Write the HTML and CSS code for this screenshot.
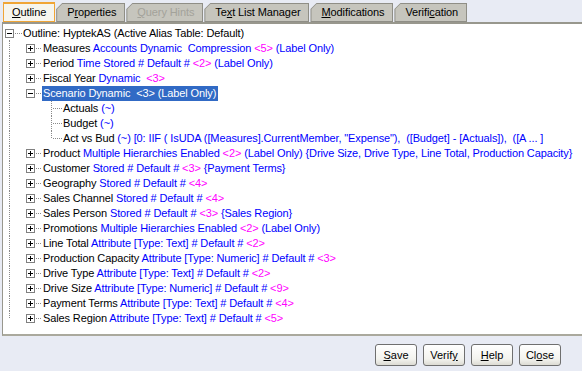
FILE: index.html
```html
<!DOCTYPE html>
<html lang="en">
<head>
    <meta charset="UTF-8">
    <title>Outline Editor</title>
    <link rel="stylesheet" href="styles.css">
</head>
<body>
    <div class="window">
        <div class="tabs">
            <div class="tab active"><span class="tab-in"><u>O</u>utline</span></div>
            <div class="tab"><span class="tab-in">P<u>r</u>operties</span></div>
            <div class="tab disabled"><span class="tab-in"><u>Q</u>uery Hints</span></div>
            <div class="tab"><span class="tab-in">Te<u>x</u>t List Manager</span></div>
            <div class="tab"><span class="tab-in"><u>M</u>odifications</span></div>
            <div class="tab"><span class="tab-in">Verifi<u>c</u>ation</span></div>
        </div>

        <div class="panel">
            <div class="row">
                <span class="node root-node"><i class="box minus"></i><i class="leg"></i></span>
                <span class="label">Outline: HyptekAS (Active Alias Table: Default)</span>
            </div>
            <div class="row">
                <span class="guide"></span>
                <span class="node"><i class="box plus"></i><i class="leg"></i></span>
                <span class="label">Measures <b>Accounts Dynamic  Compression</b> <em>&lt;5&gt;</em> <b>(Label Only)</b></span>
            </div>
            <div class="row">
                <span class="guide"></span>
                <span class="node"><i class="box plus"></i><i class="leg"></i></span>
                <span class="label">Period <b>Time Stored # Default #</b> <em>&lt;2&gt;</em> <b>(Label Only)</b></span>
            </div>
            <div class="row">
                <span class="guide"></span>
                <span class="node"><i class="box plus"></i><i class="leg"></i></span>
                <span class="label">Fiscal Year <b>Dynamic</b>  <em>&lt;3&gt;</em></span>
            </div>
            <div class="row">
                <span class="guide"></span>
                <span class="node"><i class="box minus"></i><i class="leg"></i></span>
                <span class="label selected">Scenario Dynamic  &lt;3&gt; (Label Only)</span>
            </div>
            <div class="row">
                <span class="guide"></span>
                <span class="gap"></span>
                <span class="leaf"><i class="vline"></i><i class="leg"></i></span>
                <span class="label">Actuals <b>(~)</b></span>
            </div>
            <div class="row">
                <span class="guide"></span>
                <span class="gap"></span>
                <span class="leaf"><i class="vline"></i><i class="leg"></i></span>
                <span class="label">Budget <b>(~)</b></span>
            </div>
            <div class="row">
                <span class="guide"></span>
                <span class="gap"></span>
                <span class="leaf end"><i class="vline"></i><i class="leg"></i></span>
                <span class="label">Act vs Bud <b>(~) [0: IIF ( IsUDA ([Measures].CurrentMember, "Expense"),  ([Budget] - [Actuals]),  ([A ... ]</b></span>
            </div>
            <div class="row">
                <span class="guide"></span>
                <span class="node"><i class="box plus"></i><i class="leg"></i></span>
                <span class="label">Product <b>Multiple Hierarchies Enabled</b> <em>&lt;2&gt;</em> <b>(Label Only) {Drive Size, Drive Type, Line Total, Production Capacity}</b></span>
            </div>
            <div class="row">
                <span class="guide"></span>
                <span class="node"><i class="box plus"></i><i class="leg"></i></span>
                <span class="label">Customer <b>Stored # Default #</b> <em>&lt;3&gt;</em> <b>{Payment Terms}</b></span>
            </div>
            <div class="row">
                <span class="guide"></span>
                <span class="node"><i class="box plus"></i><i class="leg"></i></span>
                <span class="label">Geography <b>Stored # Default #</b> <em>&lt;4&gt;</em></span>
            </div>
            <div class="row">
                <span class="guide"></span>
                <span class="node"><i class="box plus"></i><i class="leg"></i></span>
                <span class="label">Sales Channel <b>Stored # Default #</b> <em>&lt;4&gt;</em></span>
            </div>
            <div class="row">
                <span class="guide"></span>
                <span class="node"><i class="box plus"></i><i class="leg"></i></span>
                <span class="label">Sales Person <b>Stored # Default #</b> <em>&lt;3&gt;</em> <b>{Sales Region}</b></span>
            </div>
            <div class="row">
                <span class="guide"></span>
                <span class="node"><i class="box plus"></i><i class="leg"></i></span>
                <span class="label">Promotions <b>Multiple Hierarchies Enabled</b> <em>&lt;2&gt;</em> <b>(Label Only)</b></span>
            </div>
            <div class="row">
                <span class="guide"></span>
                <span class="node"><i class="box plus"></i><i class="leg"></i></span>
                <span class="label">Line Total <b>Attribute [Type: Text] # Default #</b> <em>&lt;2&gt;</em></span>
            </div>
            <div class="row">
                <span class="guide"></span>
                <span class="node"><i class="box plus"></i><i class="leg"></i></span>
                <span class="label">Production Capacity <b>Attribute [Type: Numeric] # Default #</b> <em>&lt;3&gt;</em></span>
            </div>
            <div class="row">
                <span class="guide"></span>
                <span class="node"><i class="box plus"></i><i class="leg"></i></span>
                <span class="label">Drive Type <b>Attribute [Type: Text] # Default #</b> <em>&lt;2&gt;</em></span>
            </div>
            <div class="row">
                <span class="guide"></span>
                <span class="node"><i class="box plus"></i><i class="leg"></i></span>
                <span class="label">Drive Size <b>Attribute [Type: Numeric] # Default #</b> <em>&lt;9&gt;</em></span>
            </div>
            <div class="row">
                <span class="guide"></span>
                <span class="node"><i class="box plus"></i><i class="leg"></i></span>
                <span class="label">Payment Terms <b>Attribute [Type: Text] # Default #</b> <em>&lt;4&gt;</em></span>
            </div>
            <div class="row">
                <span class="guide end"></span>
                <span class="node"><i class="box plus"></i><i class="leg"></i></span>
                <span class="label">Sales Region <b>Attribute [Type: Text] # Default #</b> <em>&lt;5&gt;</em></span>
            </div>
        </div>

        <div class="buttons">
            <button class="btn"><u>S</u>ave</button>
            <button class="btn">Verif<u>y</u></button>
            <button class="btn"><u>H</u>elp</button>
            <button class="btn">Cl<u>o</u>se</button>
        </div>
    </div>
</body>
</html>
```

FILE: styles.css
```css
body {
    margin: 0;
    padding: 0;
    background-color: #e8ebf4;
    font-family: "Liberation Sans", Arial, sans-serif;
    font-size: 11px;
    color: #000;
}

.window {
    display: flex;
    flex-direction: column;
    width: 582px;
    height: 371px;
}

/* tab strip */

.tabs {
    display: flex;
    align-items: flex-end;
    gap: 1px;
    height: 22px;
    padding-left: 3px;
}

.tab {
    height: 18px;
    padding: 1px 1px 0 1px;
    background-color: #8f8e86;
    clip-path: polygon(6px 0, 100% 0, 100% 100%, 0 100%, 0 6px);
}

.tab-in {
    display: block;
    height: 17px;
    line-height: 17px;
    padding: 0 8px 0 10px;
    background-color: #c6c5bd;
    clip-path: polygon(5px 0, 100% 0, 100% 100%, 0 100%, 0 5px);
    white-space: nowrap;
    letter-spacing: -0.1px;
}

.tab.active {
    height: 17px;
    padding: 0;
    border: 1px solid #f0a536;
    border-top-width: 2px;
    background-color: #f6f5ee;
    clip-path: none;
}

.tab.active .tab-in {
    height: 16px;
    line-height: 16px;
    padding: 0 8px;
    background: none;
    clip-path: none;
}

.tab.disabled .tab-in {
    color: #a3a29a;
}

/* outline tree */

.panel {
    flex: 1;
    margin-left: 2px;
    padding-top: 2px;
    background-color: #fff;
    border-top: 2px solid #98978d;
    border-left: 1px solid #98978d;
    border-bottom: 2px solid #aaa99d;
    overflow: hidden;
}

.row {
    display: flex;
    align-items: center;
    height: 15px;
}

.row i {
    display: block;
}

.guide,
.gap,
.node,
.leaf {
    flex: none;
    display: flex;
    align-items: center;
    width: 20px;
    height: 15px;
}

.guide::before {
    content: "";
    align-self: flex-start;
    width: 1px;
    height: 15px;
    margin-left: 6px;
    background: linear-gradient(#8a8a8a 50%, transparent 50%) 0 0 / 1px 2px repeat-y;
}

.guide.end::before {
    height: 8px;
}

.box {
    flex: none;
    box-sizing: border-box;
    width: 9px;
    height: 9px;
    margin-left: 3px;
    border: 1px solid #808080;
    background-color: #fff;
}

.box.minus {
    background: #fff linear-gradient(#000, #000) center / 5px 1px no-repeat;
}

.box.plus {
    background:
        linear-gradient(#000, #000) center / 5px 1px no-repeat,
        linear-gradient(#000, #000) center / 1px 5px no-repeat,
        #fff;
}

.root-node .box {
    margin-left: 2px;
}

.root-node {
    background: linear-gradient(#8a8a8a, #8a8a8a) 6px 100% / 1px 1px no-repeat;
}

.leg {
    flex: 1;
    height: 1px;
    margin: 0 1px 0 1px;
    background: linear-gradient(to right, #8a8a8a 50%, transparent 50%) 0 0 / 2px 1px repeat-x;
}

.leaf .vline {
    align-self: flex-start;
    width: 1px;
    height: 15px;
    margin-left: 8px;
    background: linear-gradient(#8a8a8a 50%, transparent 50%) 0 0 / 1px 2px repeat-y;
}

.leaf.end .vline {
    height: 8px;
}

.label {
    white-space: pre;
    line-height: 15px;
    letter-spacing: -0.12px;
}

.label b {
    font-weight: normal;
    color: #0000ff;
}

.label em {
    font-style: normal;
    color: #ff00ff;
}

.label.selected {
    margin-left: -1px;
    padding: 0 2px 0 1px;
    background-color: #316ac5;
    color: #fff;
}

/* button bar */

.buttons {
    display: flex;
    justify-content: flex-end;
    gap: 6px;
    height: 35px;
    padding: 8px 21px 0 0;
    box-sizing: border-box;
}

.btn {
    width: 42px;
    height: 22px;
    padding: 0;
    border: 1px solid #6f6f6f;
    border-radius: 3px;
    background: linear-gradient(#ffffff, #f3f3ee 70%, #dcdbd3);
    font-family: "Liberation Sans", Arial, sans-serif;
    font-size: 11px;
    color: #000;
}
```
